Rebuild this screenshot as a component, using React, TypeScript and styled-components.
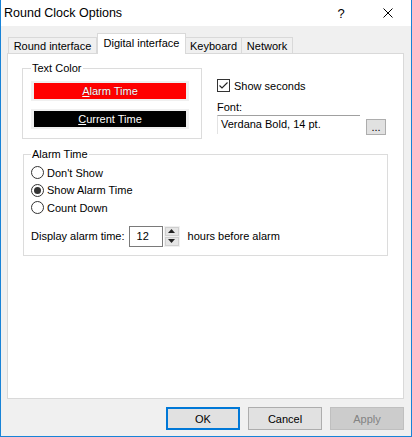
import styled, { createGlobalStyle } from "styled-components"

const FONT = `"Liberation Sans", "Noto Sans", sans-serif`

const GlobalStyle = createGlobalStyle`
    html, body {
        margin: 0;
        padding: 0;
        background: #ffffff;
    }
    * {
        box-sizing: border-box;
    }
`

const Window = styled.div`
    width: 412px;
    height: 437px;
    display: flex;
    flex-direction: column;
    background-color: #f0f0f0;
    border: 1px solid #1883d7;
    border-top: none;
    font-family: ${FONT};
    font-size: 11px;
    color: #000;
    overflow: hidden;
`
const TitleBar = styled.div`
    height: 26px;
    background-color: #ffffff;
    display: flex;
    align-items: center;
    padding-left: 3px;
`
const Title = styled.span`
    flex: 1;
    font-size: 12.5px;
`
const HelpButton = styled.span`
    width: 46px;
    text-align: center;
    font-size: 13px;
    margin-right: 1px;
`
const CloseButton = styled.span`
    width: 46px;
    display: flex;
    justify-content: center;
`
const Body = styled.div`
    flex: 1;
    display: flex;
    flex-direction: column;
    padding: 7px 7px 0 6px;
`
const TabStrip = styled.div`
    display: flex;
    align-items: flex-end;
    height: 21px;
    padding-left: 1px;
    margin-bottom: -1px;
    position: relative;
    z-index: 1;
`
const Tab = styled.div<{ width: number, active?: boolean }>`
    width: ${props => props.width}px;
    height: ${props => props.active ? 21 : 17}px;
    display: flex;
    align-items: center;
    justify-content: center;
    border: 1px solid #d9d9d9;
    border-bottom: ${props => props.active ? 'none' : '1px solid #d9d9d9'};
    border-left: ${props => props.active ? '1px solid #d9d9d9' : 'none'};
    background-color: ${props => props.active ? '#ffffff' : '#f0f0f0'};
    padding-bottom: ${props => props.active ? 3 : 0}px;
    &:first-child {
        border-left: 1px solid #d9d9d9;
    }
`
const Panel = styled.div`
    height: 346px;
    background-color: #ffffff;
    border: 1px solid #d9d9d9;
    padding: 6px 14px 0 14px;
`
const TopRow = styled.div`
    display: flex;
`
const GroupBox = styled.fieldset<{ width: number, pad: string }>`
    width: ${props => props.width}px;
    margin: 0;
    border: 1px solid #dcdcdc;
    padding: ${props => props.pad};
    min-width: 0;
`
const Legend = styled.legend`
    margin-left: 0;
    padding: 0 1px;
    line-height: 16px;
`
const ColorButton = styled.div<{ fill: string }>`
    width: 158px;
    height: 20px;
    background-color: #f0f0f0;
    padding: 2px 3px;
    & > div {
        height: 100%;
        background-color: ${props => props.fill};
        color: #ffffff;
        display: flex;
        align-items: center;
        justify-content: center;
        text-shadow: 0 0 1px rgba(0,0,0,0.6);
    }
`
const RightColumn = styled.div`
    width: 170px;
    margin-left: 15px;
    padding-top: 18px;
    display: flex;
    flex-direction: column;
`
const CheckRow = styled.label`
    display: flex;
    align-items: center;
    gap: 4px;
    height: 15px;
`
const CheckBox = styled.span`
    width: 13px;
    height: 13px;
    border: 1px solid #333;
    background: #fff;
    display: flex;
    align-items: center;
    justify-content: center;
`
const FieldLabel = styled.div`
    margin-top: 6px;
    line-height: 16px;
`
const FontRow = styled.div`
    display: flex;
    align-items: flex-start;
`
const FontBox = styled.div`
    width: 143px;
    height: 19px;
    border-top: 1px solid #a0a0a0;
    border-left: 1px solid #e3e3e3;
    padding: 2px 0 0 3px;
`
const SmallButton = styled.div`
    width: 20px;
    height: 16px;
    margin: 4px 0 0 6px;
    background-color: #e1e1e1;
    border: 1px solid #adadad;
    display: flex;
    align-items: flex-end;
    justify-content: center;
    line-height: 12px;
    padding-bottom: 1px;
`
const RadioRow = styled.label`
    display: flex;
    align-items: center;
    gap: 3px;
    height: 17.5px;
`
const Radio = styled.span<{ checked?: boolean }>`
    width: 13px;
    height: 13px;
    border-radius: 50%;
    border: 1px solid #333;
    display: flex;
    align-items: center;
    justify-content: center;
    &::after {
        content: "";
        width: 7px;
        height: 7px;
        border-radius: 50%;
        background: ${props => props.checked ? '#333' : 'transparent'};
    }
`
const SpinRow = styled.div`
    display: flex;
    align-items: center;
    margin-top: 9px;
`
const SpinInput = styled.div`
    width: 34px;
    height: 21px;
    margin-left: 4px;
    border: 1px solid #7a7a7a;
    padding-left: 7px;
    display: flex;
    align-items: center;
`
const SpinButtons = styled.div`
    width: 16px;
    height: 21px;
    margin-left: 1px;
    display: flex;
    flex-direction: column;
    gap: 1px;
    background: #f0f0f0;
    padding: 1px;
`
const SpinArrow = styled.div`
    flex: 1;
    background: #e5e5e5;
    border: 1px solid #cfcfcf;
    display: flex;
    align-items: center;
    justify-content: center;
`
const SpinSuffix = styled.span`
    margin-left: 8px;
`
const ButtonRow = styled.div`
    display: flex;
    justify-content: flex-end;
    gap: 8px;
    margin-top: 8px;
`
const DialogButton = styled.div<{ variant?: 'default' | 'disabled' }>`
    width: 74px;
    height: 23px;
    display: flex;
    align-items: center;
    justify-content: center;
    background-color: ${props => props.variant === 'disabled' ? '#cccccc' : '#e1e1e1'};
    color: ${props => props.variant === 'disabled' ? '#838383' : '#000'};
    border: ${props => props.variant === 'default' ? '2px solid #0078d7' : props.variant === 'disabled' ? '1px solid #bfbfbf' : '1px solid #adadad'};
`

export default function App() {
    return (
        <>
            <GlobalStyle />
            <Window>
                <TitleBar>
                    <Title>Round Clock Options</Title>
                    <HelpButton>?</HelpButton>
                    <CloseButton>
                        <svg width="10" height="10" viewBox="0 0 10 10">
                            <path d="M0.5 0.5 L9.5 9.5 M9.5 0.5 L0.5 9.5" stroke="#000" strokeWidth="1" />
                        </svg>
                    </CloseButton>
                </TitleBar>
                <Body>
                    <TabStrip>
                        <Tab width={89}>Round interface</Tab>
                        <Tab width={89} active>Digital interface</Tab>
                        <Tab width={56}>Keyboard</Tab>
                        <Tab width={51}>Network</Tab>
                    </TabStrip>
                    <Panel>
                        <TopRow>
                            <GroupBox width={180} pad="5px 0 0 8px" style={{ height: 79 }}>
                                <Legend>Text Color</Legend>
                                <ColorButton fill="#ff0000">
                                    <div><span><u>A</u>larm Time</span></div>
                                </ColorButton>
                                <ColorButton fill="#000000" style={{ marginTop: 8 }}>
                                    <div><span><u>C</u>urrent Time</span></div>
                                </ColorButton>
                            </GroupBox>
                            <RightColumn>
                                <CheckRow>
                                    <CheckBox>
                                        <svg width="11" height="11" viewBox="0 0 11 11">
                                            <path d="M1.5 5.5 L4 8 L9.5 2.5" stroke="#222" strokeWidth="1.1" fill="none" />
                                        </svg>
                                    </CheckBox>
                                    Show seconds
                                </CheckRow>
                                <FieldLabel>Font:</FieldLabel>
                                <FontRow>
                                    <FontBox>Verdana Bold, 14 pt.</FontBox>
                                    <SmallButton>...</SmallButton>
                                </FontRow>
                            </RightColumn>
                        </TopRow>
                        <GroupBox width={365} pad="2px 0 8px 7px" style={{ marginTop: 7, marginLeft: 1 }}>
                            <Legend>Alarm Time</Legend>
                            <RadioRow><Radio />Don't Show</RadioRow>
                            <RadioRow><Radio checked />Show Alarm Time</RadioRow>
                            <RadioRow><Radio />Count Down</RadioRow>
                            <SpinRow>
                                <span>Display alarm time:</span>
                                <SpinInput>12</SpinInput>
                                <SpinButtons>
                                    <SpinArrow>
                                        <svg width="7" height="4" viewBox="0 0 7 4"><path d="M0 4 L3.5 0 L7 4 Z" fill="#222" /></svg>
                                    </SpinArrow>
                                    <SpinArrow>
                                        <svg width="7" height="4" viewBox="0 0 7 4"><path d="M0 0 L3.5 4 L7 0 Z" fill="#222" /></svg>
                                    </SpinArrow>
                                </SpinButtons>
                                <SpinSuffix>hours before alarm</SpinSuffix>
                            </SpinRow>
                        </GroupBox>
                    </Panel>
                    <ButtonRow>
                        <DialogButton variant="default">OK</DialogButton>
                        <DialogButton>Cancel</DialogButton>
                        <DialogButton variant="disabled">Apply</DialogButton>
                    </ButtonRow>
                </Body>
            </Window>
        </>
    )
}
